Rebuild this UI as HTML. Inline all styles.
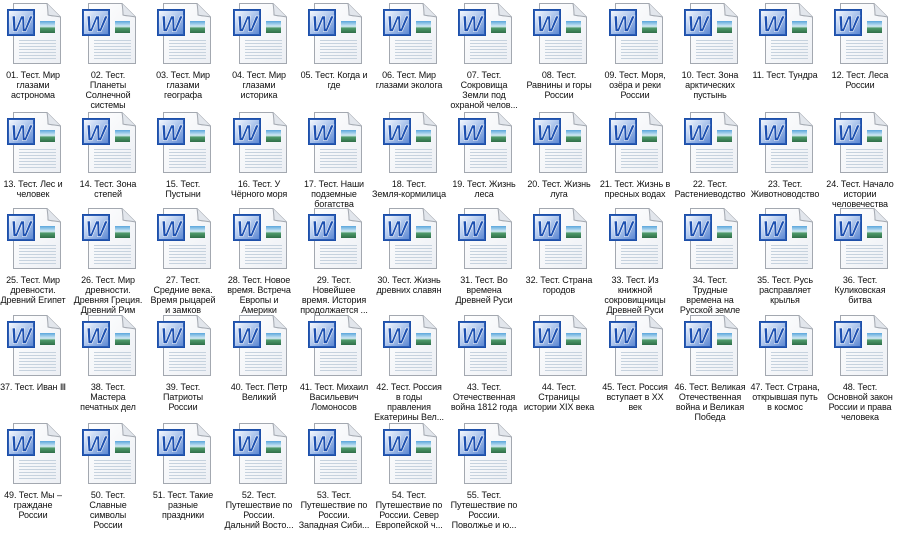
<!DOCTYPE html>
<html><head><meta charset="utf-8"><style>
html,body{margin:0;padding:0;background:#fff;width:900px;height:540px;overflow:hidden;position:relative}
.c{position:absolute;width:76px}
.c svg{position:absolute;left:11px;top:0;width:56px;height:64px}
.c div{position:absolute;left:-4px;width:84px;top:70px;text-align:center;font:9px/10px "Liberation Sans",sans-serif;color:#111;white-space:nowrap;letter-spacing:-0.1px}
</style></head><body>
<svg width="0" height="0" style="position:absolute">
<defs>
<linearGradient id="pg" x1="0" y1="0" x2="1" y2="1"><stop offset="0" stop-color="#ffffff"/><stop offset="1" stop-color="#eceff4"/></linearGradient>
<linearGradient id="wb" x1="0" y1="0" x2="1" y2="1"><stop offset="0" stop-color="#f4f8fe"/><stop offset="0.45" stop-color="#b3caee"/><stop offset="1" stop-color="#5d88d2"/></linearGradient>
<linearGradient id="im" x1="0" y1="0" x2="0" y2="1"><stop offset="0" stop-color="#5aa6dc"/><stop offset="0.45" stop-color="#d4eaf4"/><stop offset="0.6" stop-color="#4e9a6a"/><stop offset="1" stop-color="#2f6e48"/></linearGradient>
<symbol id="ic" viewBox="0 0 56 64">
<path d="M7.5 3.5H41L54.5 17V63.5H7.5Z" fill="url(#pg)" stroke="#a3a8b0"/>
<path d="M41 3.5C42 10 42 15 42 15C45 16 50 16 54.5 17" fill="#e2e6ec" stroke="#a3a8b0"/>
<g stroke="#c6d2de" stroke-width="1"><path d="M13 40.5H50M13 43.5H50M13 46.5H50M13 49.5H50M13 52.5H50M13 55.5H50M13 58.5H50"/></g>
<rect x="34" y="21" width="15" height="12" fill="url(#im)"/>
<rect x="1.5" y="9.5" width="27" height="26" fill="#2a5cb6" stroke="#1d4fa8"/>
<rect x="3" y="11" width="24" height="23" fill="url(#wb)"/>
<text x="15" y="31.5" text-anchor="middle" font-family="Liberation Sans,sans-serif" font-weight="bold" font-style="italic" font-size="22" fill="#1d50b0" stroke="#fff" stroke-width="0.5">W</text>
</symbol>
</defs></svg>

<div class="c" style="left:-5px;top:0px"><svg><use href="#ic"/></svg><div>01. Тест. Мир<br>глазами<br>астронома</div></div>
<div class="c" style="left:70px;top:0px"><svg><use href="#ic"/></svg><div>02. Тест.<br>Планеты<br>Солнечной<br>системы</div></div>
<div class="c" style="left:145px;top:0px"><svg><use href="#ic"/></svg><div>03. Тест. Мир<br>глазами<br>географа</div></div>
<div class="c" style="left:221px;top:0px"><svg><use href="#ic"/></svg><div>04. Тест. Мир<br>глазами<br>историка</div></div>
<div class="c" style="left:296px;top:0px"><svg><use href="#ic"/></svg><div>05. Тест. Когда и<br>где</div></div>
<div class="c" style="left:371px;top:0px"><svg><use href="#ic"/></svg><div>06. Тест. Мир<br>глазами эколога</div></div>
<div class="c" style="left:446px;top:0px"><svg><use href="#ic"/></svg><div>07. Тест.<br>Сокровища<br>Земли под<br>охраной челов...</div></div>
<div class="c" style="left:521px;top:0px"><svg><use href="#ic"/></svg><div>08. Тест.<br>Равнины и горы<br>России</div></div>
<div class="c" style="left:597px;top:0px"><svg><use href="#ic"/></svg><div>09. Тест. Моря,<br>озёра и реки<br>России</div></div>
<div class="c" style="left:672px;top:0px"><svg><use href="#ic"/></svg><div>10. Тест. Зона<br>арктических<br>пустынь</div></div>
<div class="c" style="left:747px;top:0px"><svg><use href="#ic"/></svg><div>11. Тест. Тундра</div></div>
<div class="c" style="left:822px;top:0px"><svg><use href="#ic"/></svg><div>12. Тест. Леса<br>России</div></div>

<div class="c" style="left:-5px;top:109px"><svg><use href="#ic"/></svg><div>13. Тест. Лес и<br>человек</div></div>
<div class="c" style="left:70px;top:109px"><svg><use href="#ic"/></svg><div>14. Тест. Зона<br>степей</div></div>
<div class="c" style="left:145px;top:109px"><svg><use href="#ic"/></svg><div>15. Тест.<br>Пустыни</div></div>
<div class="c" style="left:221px;top:109px"><svg><use href="#ic"/></svg><div>16. Тест. У<br>Чёрного моря</div></div>
<div class="c" style="left:296px;top:109px"><svg><use href="#ic"/></svg><div>17. Тест. Наши<br>подземные<br>богатства</div></div>
<div class="c" style="left:371px;top:109px"><svg><use href="#ic"/></svg><div>18. Тест.<br>Земля-кормилица</div></div>
<div class="c" style="left:446px;top:109px"><svg><use href="#ic"/></svg><div>19. Тест. Жизнь<br>леса</div></div>
<div class="c" style="left:521px;top:109px"><svg><use href="#ic"/></svg><div>20. Тест. Жизнь<br>луга</div></div>
<div class="c" style="left:597px;top:109px"><svg><use href="#ic"/></svg><div>21. Тест. Жизнь в<br>пресных водах</div></div>
<div class="c" style="left:672px;top:109px"><svg><use href="#ic"/></svg><div>22. Тест.<br>Растениеводство</div></div>
<div class="c" style="left:747px;top:109px"><svg><use href="#ic"/></svg><div>23. Тест.<br>Животноводство</div></div>
<div class="c" style="left:822px;top:109px"><svg><use href="#ic"/></svg><div>24. Тест. Начало<br>истории<br>человечества</div></div>

<div class="c" style="left:-5px;top:205px"><svg><use href="#ic"/></svg><div>25. Тест. Мир<br>древности.<br>Древний Египет</div></div>
<div class="c" style="left:70px;top:205px"><svg><use href="#ic"/></svg><div>26. Тест. Мир<br>древности.<br>Древняя Греция.<br>Древний Рим</div></div>
<div class="c" style="left:145px;top:205px"><svg><use href="#ic"/></svg><div>27. Тест.<br>Средние века.<br>Время рыцарей<br>и замков</div></div>
<div class="c" style="left:221px;top:205px"><svg><use href="#ic"/></svg><div>28. Тест. Новое<br>время. Встреча<br>Европы и<br>Америки</div></div>
<div class="c" style="left:296px;top:205px"><svg><use href="#ic"/></svg><div>29. Тест.<br>Новейшее<br>время. История<br>продолжается ...</div></div>
<div class="c" style="left:371px;top:205px"><svg><use href="#ic"/></svg><div>30. Тест. Жизнь<br>древних славян</div></div>
<div class="c" style="left:446px;top:205px"><svg><use href="#ic"/></svg><div>31. Тест. Во<br>времена<br>Древней Руси</div></div>
<div class="c" style="left:521px;top:205px"><svg><use href="#ic"/></svg><div>32. Тест. Страна<br>городов</div></div>
<div class="c" style="left:597px;top:205px"><svg><use href="#ic"/></svg><div>33. Тест. Из<br>книжной<br>сокровищницы<br>Древней Руси</div></div>
<div class="c" style="left:672px;top:205px"><svg><use href="#ic"/></svg><div>34. Тест.<br>Трудные<br>времена на<br>Русской земле</div></div>
<div class="c" style="left:747px;top:205px"><svg><use href="#ic"/></svg><div>35. Тест. Русь<br>расправляет<br>крылья</div></div>
<div class="c" style="left:822px;top:205px"><svg><use href="#ic"/></svg><div>36. Тест.<br>Куликовская<br>битва</div></div>

<div class="c" style="left:-5px;top:312px"><svg><use href="#ic"/></svg><div>37. Тест. Иван Ⅲ</div></div>
<div class="c" style="left:70px;top:312px"><svg><use href="#ic"/></svg><div>38. Тест.<br>Мастера<br>печатных дел</div></div>
<div class="c" style="left:145px;top:312px"><svg><use href="#ic"/></svg><div>39. Тест.<br>Патриоты<br>России</div></div>
<div class="c" style="left:221px;top:312px"><svg><use href="#ic"/></svg><div>40. Тест. Петр<br>Великий</div></div>
<div class="c" style="left:296px;top:312px"><svg><use href="#ic"/></svg><div>41. Тест. Михаил<br>Васильевич<br>Ломоносов</div></div>
<div class="c" style="left:371px;top:312px"><svg><use href="#ic"/></svg><div>42. Тест. Россия<br>в годы<br>правления<br>Екатерины Вел...</div></div>
<div class="c" style="left:446px;top:312px"><svg><use href="#ic"/></svg><div>43. Тест.<br>Отечественная<br>война 1812 года</div></div>
<div class="c" style="left:521px;top:312px"><svg><use href="#ic"/></svg><div>44. Тест.<br>Страницы<br>истории XIX века</div></div>
<div class="c" style="left:597px;top:312px"><svg><use href="#ic"/></svg><div>45. Тест. Россия<br>вступает в XX<br>век</div></div>
<div class="c" style="left:672px;top:312px"><svg><use href="#ic"/></svg><div>46. Тест. Великая<br>Отечественная<br>война и Великая<br>Победа</div></div>
<div class="c" style="left:747px;top:312px"><svg><use href="#ic"/></svg><div>47. Тест. Страна,<br>открывшая путь<br>в космос</div></div>
<div class="c" style="left:822px;top:312px"><svg><use href="#ic"/></svg><div>48. Тест.<br>Основной закон<br>России и права<br>человека</div></div>

<div class="c" style="left:-5px;top:420px"><svg><use href="#ic"/></svg><div>49. Тест. Мы –<br>граждане<br>России</div></div>
<div class="c" style="left:70px;top:420px"><svg><use href="#ic"/></svg><div>50. Тест.<br>Славные<br>символы<br>России</div></div>
<div class="c" style="left:145px;top:420px"><svg><use href="#ic"/></svg><div>51. Тест. Такие<br>разные<br>праздники</div></div>
<div class="c" style="left:221px;top:420px"><svg><use href="#ic"/></svg><div>52. Тест.<br>Путешествие по<br>России.<br>Дальний Восто...</div></div>
<div class="c" style="left:296px;top:420px"><svg><use href="#ic"/></svg><div>53. Тест.<br>Путешествие по<br>России.<br>Западная Сиби...</div></div>
<div class="c" style="left:371px;top:420px"><svg><use href="#ic"/></svg><div>54. Тест.<br>Путешествие по<br>России. Север<br>Европейской ч...</div></div>
<div class="c" style="left:446px;top:420px"><svg><use href="#ic"/></svg><div>55. Тест.<br>Путешествие по<br>России.<br>Поволжье и ю...</div></div>
</body></html>
